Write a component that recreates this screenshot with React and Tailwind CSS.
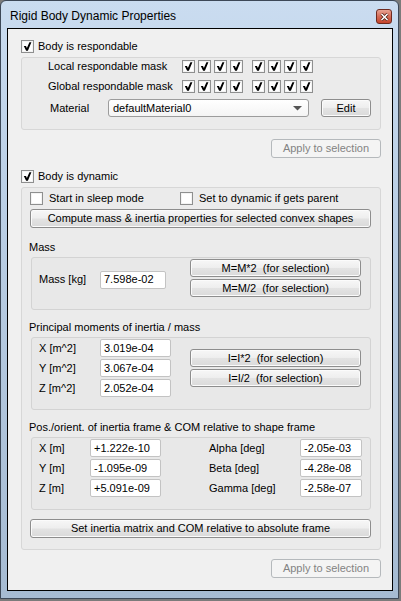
import React from "react";

const Check = ({ checked = true }) => (
  <div className="w-[13px] h-[13px] shrink-0 border border-[#8e8f8f] bg-white shadow-[inset_0_0_0_1px_#f3f3f3] flex items-center justify-center">
    {checked && (
      <svg width="11" height="11" viewBox="0 0 11 11">
        <polygon points="1.8,5 4,5 4.9,7 7.4,1.2 9.4,1.2 5.9,9.8 4.1,9.8" fill="#000" />
      </svg>
    )}
  </div>
);

const Btn = ({ children, className = "", disabled }) => (
  <div
    className={`flex items-center justify-center rounded-[3px] border whitespace-nowrap ${
      disabled
        ? "border-[#b5b9bc] bg-[#f4f4f4] text-[#838383]"
        : "border-[#8d8d8d] bg-[linear-gradient(#f7f7f7,#eeeeee_48%,#e3e3e3_52%,#dadada)] shadow-[inset_0_0_0_1px_#fbfbfb] text-black"
    } ${className}`}
  >
    {children}
  </div>
);

const Field = ({ value, className = "" }) => (
  <div
    className={`h-[18px] bg-white border border-[#c3c3c3] rounded-[2px] flex items-center pl-[3px] whitespace-nowrap ${className}`}
  >
    {value}
  </div>
);

const MaskRow = ({ label, mt }) => (
  <div className={`flex items-center h-[13px] pl-[26px] ${mt}`}>
    <span className="w-[134px] whitespace-nowrap">{label}</span>
    <div className="flex gap-[3px]">
      <Check />
      <Check />
      <Check />
      <Check />
    </div>
    <div className="flex gap-[3px] ml-[9px]">
      <Check />
      <Check />
      <Check />
      <Check />
    </div>
  </div>
);

export default function App() {
  const inertia = [
    ["X [m^2]", "3.019e-04"],
    ["Y [m^2]", "3.067e-04"],
    ["Z [m^2]", "2.052e-04"],
  ];
  const pos = [
    ["X [m]", "+1.222e-10", "Alpha [deg]", "-2.05e-03"],
    ["Y [m]", "-1.095e-09", "Beta [deg]", "-4.28e-08"],
    ["Z [m]", "+5.091e-09", "Gamma [deg]", "-2.58e-07"],
  ];

  return (
    <div className="w-[401px] h-[601px] bg-[#7b7b7b] font-['Liberation_Sans',Arial,sans-serif] text-[11px] text-black leading-none">
      {/* Window frame */}
      <div className="w-[399px] h-[599px] border border-[#3d4857] rounded-t-[6px] bg-[linear-gradient(#cadcf0,#bcd0e6_30%,#a6bbd2)] flex flex-col">
        {/* Title bar */}
        <div className="h-[27px] flex items-start">
          <span className="ml-[9px] mt-[8px] text-[12px] leading-[14px] text-black">
            Rigid Body Dynamic Properties
          </span>
          <div className="ml-auto mr-[6px] mt-[8px] w-[16px] h-[15px] rounded-[3px] border border-[#6e2a1f] bg-[linear-gradient(#e8a393,#d46a55_50%,#c4442c)] flex items-center justify-center">
            <svg width="9" height="8" viewBox="0 0 9 8">
              <path d="M1.5 1 L7.5 7 M7.5 1 L1.5 7" stroke="#4a1a12" strokeWidth="3" />
              <path d="M1.5 1 L7.5 7 M7.5 1 L1.5 7" stroke="#fff" strokeWidth="1.6" />
            </svg>
          </div>
        </div>

        {/* Client area */}
        <div className="ml-[6px] w-[386px] h-[563px] border border-black bg-[#f0f0f0] flex flex-col pl-[13px]">
          <div className="mt-[11px] h-[13px] flex items-center gap-[4px]">
            <Check />
            <span>Body is respondable</span>
          </div>

          <div className="mt-[4px] w-[360px] h-[73px] border border-[#d7d7d7] rounded-[3px] bg-[#ebebeb] flex flex-col">
            <MaskRow label="Local respondable mask" mt="mt-[2px]" />
            <MaskRow label="Global respondable mask" mt="mt-[7px]" />
            <div className="mt-[6px] h-[18px] flex items-center pl-[28px]">
              <span className="w-[58px]">Material</span>
              <div className="w-[201px] h-[18px] rounded-[3px] border border-[#9c9c9c] bg-[linear-gradient(#ffffff,#f4f4f4)] flex items-center pl-[4px] pr-[6px]">
                <span>defaultMaterial0</span>
                <svg className="ml-auto" width="9" height="5" viewBox="0 0 9 5">
                  <polygon points="0,0 9,0 4.5,4.5" fill="#555" />
                </svg>
              </div>
              <Btn className="ml-[12px] w-[50px] h-[18px]">Edit</Btn>
            </div>
          </div>

          <Btn disabled className="mt-[9px] ml-[250px] w-[110px] h-[19px]">
            Apply to selection
          </Btn>

          <div className="mt-[12px] h-[13px] flex items-center gap-[4px]">
            <Check />
            <span>Body is dynamic</span>
          </div>

          <div className="mt-[4px] w-[360px] h-[363px] border border-[#d7d7d7] rounded-[3px] bg-[#ebebeb] flex flex-col pl-[8px]">
            <div className="mt-[4px] h-[13px] flex items-center">
              <div className="w-[150px] flex items-center gap-[6px]">
                <Check checked={false} />
                <span>Start in sleep mode</span>
              </div>
              <div className="flex items-center gap-[6px]">
                <Check checked={false} />
                <span>Set to dynamic if gets parent</span>
              </div>
            </div>

            <Btn className="mt-[4px] w-[341px] h-[19px]">
              Compute mass &amp; inertia properties for selected convex shapes
            </Btn>

            <div className="mt-[11px] h-[16px] flex items-center -ml-[1px]">Mass</div>
            <div className="mt-[2px] ml-[1px] w-[340px] h-[53px] border border-[#d3d3d3] rounded-[3px] bg-[#e8e8e8] flex items-start pl-[7px]">
              <div className="mt-[13px] h-[17px] flex items-center">
                <span className="w-[61px]">Mass [kg]</span>
                <Field value="7.598e-02" className="w-[66px] h-[17px]" />
              </div>
              <div className="mt-[1px] ml-[24px] flex flex-col gap-[2px]">
                <Btn className="w-[171px] h-[18px]">M=M*2&nbsp; (for selection)</Btn>
                <Btn className="w-[171px] h-[18px]">M=M/2&nbsp; (for selection)</Btn>
              </div>
            </div>

            <div className="mt-[9px] h-[16px] flex items-center -ml-[1px]">
              Principal moments of inertia / mass
            </div>
            <div className="mt-[2px] ml-[1px] w-[340px] h-[73px] border border-[#d3d3d3] rounded-[3px] bg-[#e8e8e8] flex items-start pl-[7px]">
              <div className="mt-[1px] flex flex-col gap-[2px]">
                {inertia.map(([l, v]) => (
                  <div key={l} className="h-[18px] flex items-center">
                    <span className="w-[61px]">{l}</span>
                    <Field value={v} className="w-[71px]" />
                  </div>
                ))}
              </div>
              <div className="mt-[11px] ml-[19px] flex flex-col gap-[2px]">
                <Btn className="w-[171px] h-[18px]">I=I*2&nbsp; (for selection)</Btn>
                <Btn className="w-[171px] h-[18px]">I=I/2&nbsp; (for selection)</Btn>
              </div>
            </div>

            <div className="mt-[9px] h-[16px] flex items-center -ml-[1px]">
              Pos./orient. of inertia frame &amp; COM relative to shape frame
            </div>
            <div className="mt-[2px] ml-[1px] w-[340px] h-[73px] border border-[#d3d3d3] rounded-[3px] bg-[#e8e8e8] flex flex-col pl-[7px] pt-[1px] gap-[2px]">
              {pos.map(([l, v, l2, v2]) => (
                <div key={l} className="h-[18px] flex items-center">
                  <span className="w-[51px]">{l}</span>
                  <Field value={v} className="w-[71px]" />
                  <span className="ml-[48px] w-[91px]">{l2}</span>
                  <Field value={v2} className="w-[62px]" />
                </div>
              ))}
            </div>

            <Btn className="mt-[9px] w-[341px] h-[19px]">
              Set inertia matrix and COM relative to absolute frame
            </Btn>
          </div>

          <Btn disabled className="mt-[9px] ml-[250px] w-[110px] h-[19px]">
            Apply to selection
          </Btn>
        </div>
      </div>
    </div>
  );
}
